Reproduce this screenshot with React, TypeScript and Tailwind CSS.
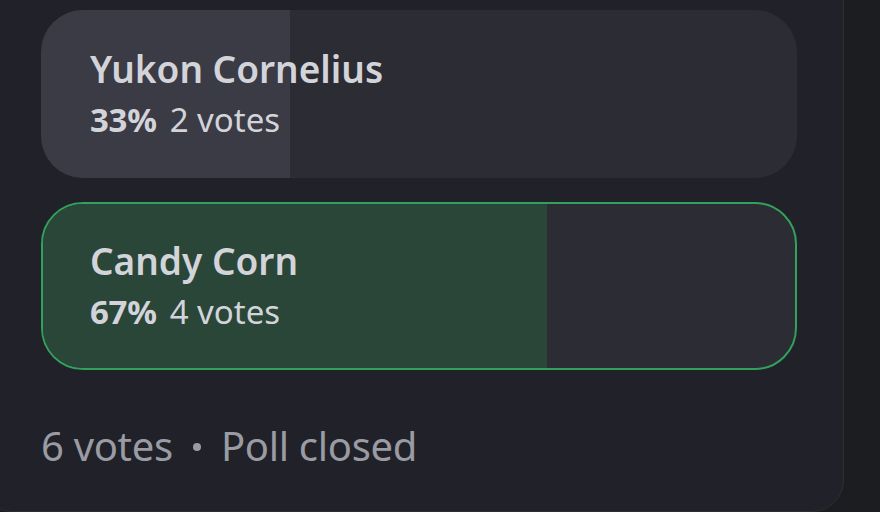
import React from 'react';

interface PollOption {
    label: string;
    percent: number;
    votes: number;
    winner?: boolean;
}

const options: PollOption[] = [
    { label: 'Yukon Cornelius', percent: 33, votes: 2 },
    { label: 'Candy Corn', percent: 67, votes: 4, winner: true },
];

const font = { fontFamily: '"Noto Sans", "Open Sans", sans-serif' };

const OptionRow: React.FC<{ option: PollOption }> = ({ option }) => {
    const fill = option.winner ? 'bg-[#2a4639]' : 'bg-[#3b3b46]';
    const frame = option.winner ? 'border-2 border-[#31a15b]' : '';
    return (
        <div className={`relative h-[168px] rounded-[42px] overflow-hidden bg-[#2c2c34] ${frame}`}>
            <div className={`absolute inset-y-0 left-0 ${fill}`} style={{ width: `${option.percent}%` }} />
            <div className={`relative h-full flex flex-col justify-center ${option.winner ? 'pl-[47px]' : 'pl-[49px]'} pb-[2px]`}>
                <div className="text-[37px] leading-[46px] font-semibold text-[#d3d4d9]">{option.label}</div>
                <div className="mt-[8px] flex items-baseline text-[33px] leading-[40px] text-[#d3d4d9]">
                    <span className="font-bold tracking-[-0.3px]">{option.percent}%</span>
                    <span className="ml-[13px]">{option.votes} votes</span>
                </div>
            </div>
        </div>
    );
};

export default function App() {
    return (
        <div className="w-[880px] h-[512px] overflow-hidden bg-[#1c1d21]" style={font}>
            <div className="ml-[-20px] mt-[-30px] w-[864px] h-[542px] rounded-[32px] border border-[#2d2e35] bg-[#212229] pl-[60px] pr-[46px] pt-[39px]">
                <div className="flex flex-col gap-[24px]">
                    {options.map(o => <OptionRow key={o.label} option={o} />)}
                </div>
                <div className="mt-[50px] flex items-center text-[40px] leading-[52px] text-[#9a9ba3] tracking-[-0.3px]">
                    <span>6 votes</span>
                    <span className="mx-[20px] mt-[2px] w-[8px] h-[8px] rounded-full bg-[#9a9ba3]" />
                    <span>Poll closed</span>
                </div>
            </div>
        </div>
    );
}
